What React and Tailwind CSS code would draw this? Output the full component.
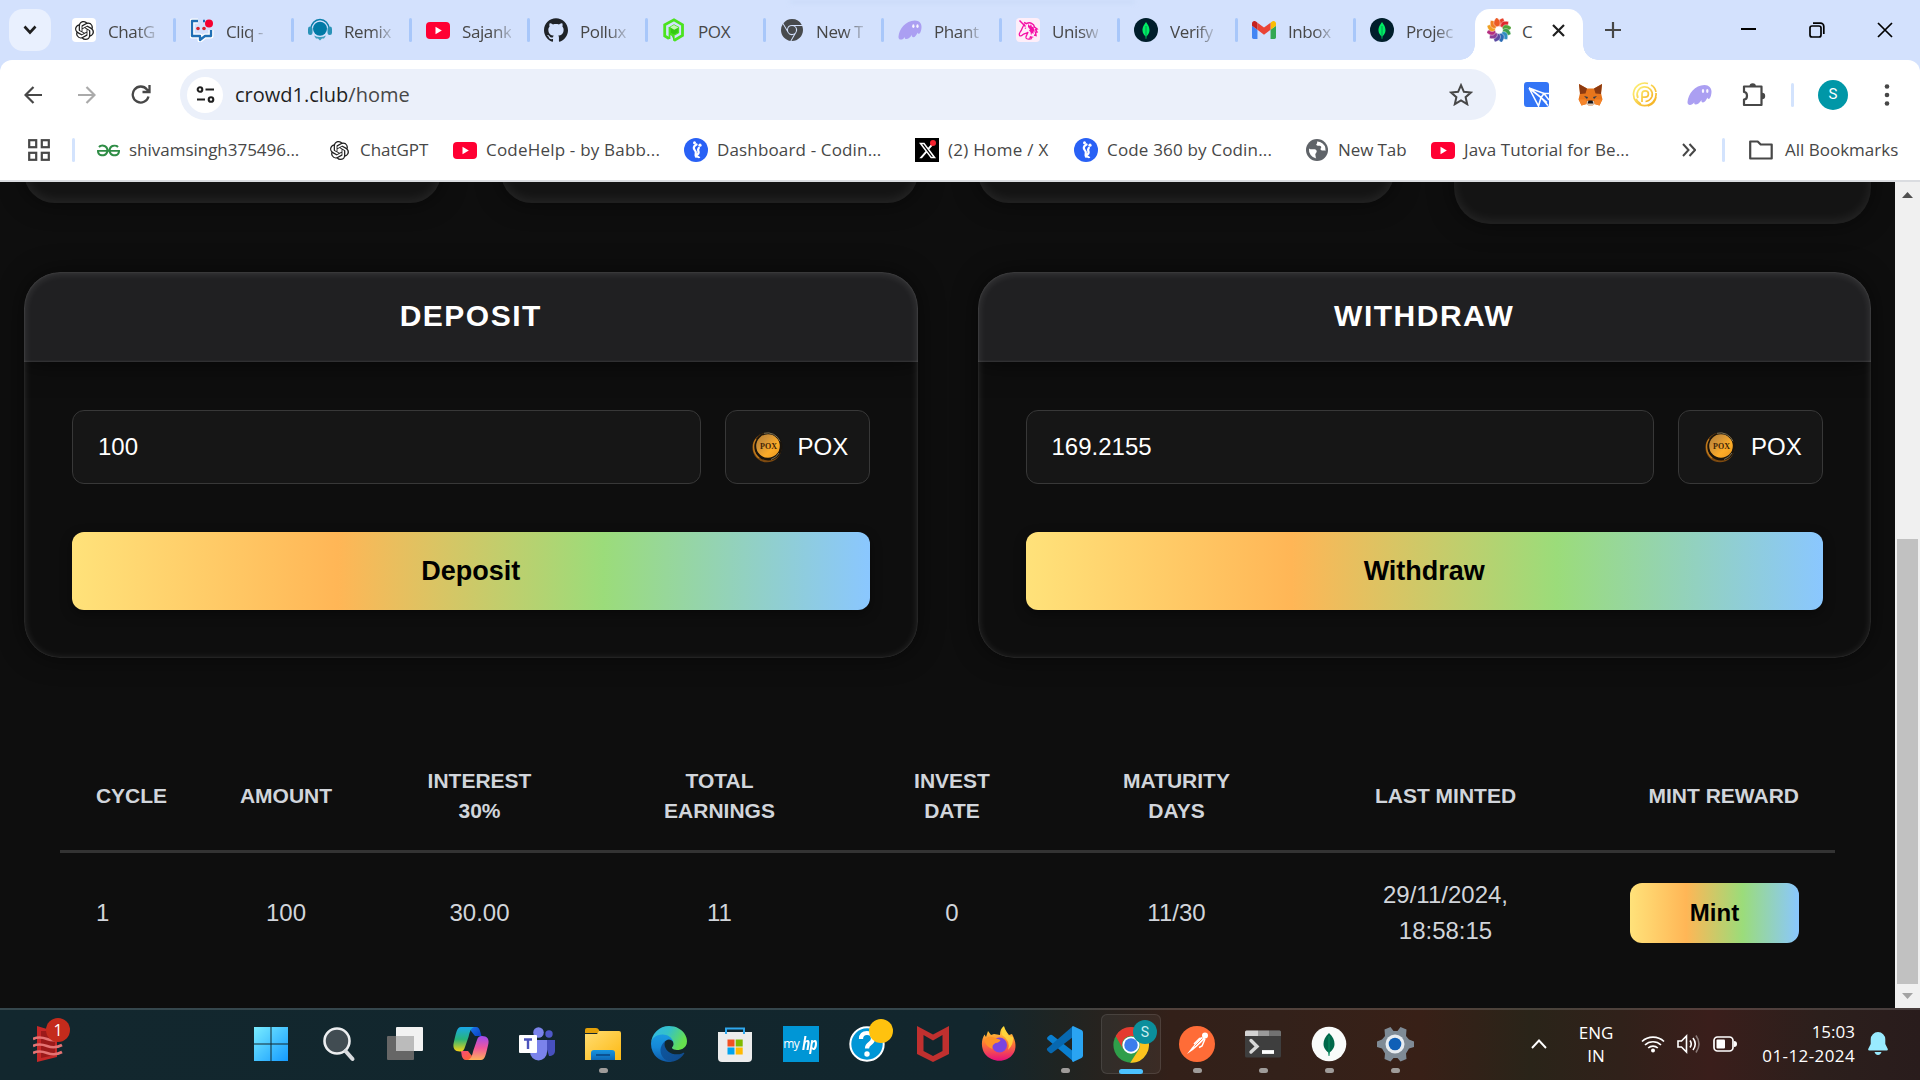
import React from "react";
import { SiOpenai, SiYoutube, SiGithub, SiGooglechrome, SiGeeksforgeeks } from "react-icons/si";
import { FaXTwitter } from "react-icons/fa6";

/* ---------- browser icons ---------- */
const OpenAITile = () => (
  <div className="flex h-6 w-6 items-center justify-center rounded-[4px] bg-white text-[#1f1f1f]"><SiOpenai size={19} /></div>
);
const YouTube = () => (
  <svg width="24" height="24" viewBox="0 0 24 24"><rect y="4" width="24" height="17" rx="4" fill="#ff0033" /><path d="M9.500 8.800v7.400l6.300-3.700z" fill="#fff" /></svg>
);
const Cliq = () => (
  <svg width="24" height="24" viewBox="0 0 24 24" fill="none">
    <path d="M8 3H2v15h8v4l5-4h6v-6" stroke="#fff" strokeWidth="5" strokeLinejoin="round" />
    <path d="M8 3H2v15h8v4l5-4h6v-6M13 3h2" stroke="#1f6fb5" strokeWidth="2.300" strokeLinejoin="round" />
    <circle cx="8" cy="10.500" r="1.800" fill="#d9222a" /><circle cx="14" cy="10.500" r="1.800" fill="#d9222a" /><circle cx="19" cy="5.500" r="4" fill="#f5002f" />
  </svg>
);
const Remix = () => (
  <svg width="24" height="24" viewBox="0 0 24 24">
    <path d="M3 11a9 9.500 0 0 1 18 0" fill="none" stroke="#0a7fab" strokeWidth="1.600" />
    <rect x="0" y="8.500" width="4.500" height="8.500" rx="2.200" fill="#2a93b8" /><rect x="19.500" y="8.500" width="4.500" height="8.500" rx="2.200" fill="#2a93b8" />
    <circle cx="12" cy="10.800" r="7" fill="#007aa6" /><path d="M6 17.500q6 3 12 0l-2 3h-2l-2 2-2-2H8z" fill="#3b9dbd" />
  </svg>
);
const Pox = () => (
  <svg width="24" height="24" viewBox="0 0 24 24" fill="none">
    <path d="M7 20.500l-4.300-2.600V6.800L12 1.800l8.500 5v10.700l-8.500 5" stroke="#4be31f" strokeWidth="2.800" />
    <path d="M12 23v-4.500l-4-2.300V9.300L12 7l4.500 2.500v5.200L12 17.200 9 15.500" fill="#35c912" stroke="#4be31f" strokeWidth="1.300" />
    <path d="M8 9.300l4.200 2.500 4.300-2.400L12 7z" fill="#c4f7b4" /><path d="M7.500 9v12" stroke="#4be31f" strokeWidth="1.800" />
  </svg>
);
const Ghost = () => (
  <svg width="25" height="24" viewBox="0 0 25 24">
    <path d="M.5 19C1 11 8 2 17.500 2c4.500 0 7 3 7 6.500 0 4-1.500 7.500-2.800 7.500-.8 0-1.200-1-1.200-1.500-1.200 2.500-2.800 5-4.500 5-1.500 0-1.800-1.500-1.500-2.500-2 3-4 4.500-5.800 4.500-1.500 0-1.700-1.200-1.400-2.200C6 21 4.500 22 3 22 1.200 22 .4 20.600.5 19z" fill="#ab9ff2" />
    <ellipse cx="16" cy="8" rx="1.200" ry="1.900" fill="#f8f6ff" /><ellipse cx="20.300" cy="8" rx="1.200" ry="1.900" fill="#f8f6ff" />
  </svg>
);
const Unicorn = () => (
  <svg width="24" height="24" viewBox="0 0 24 24"><rect width="24" height="24" rx="4" fill="#feeef9" />
    <path d="M3.500 2.500l6 6M8 4.500l2.500 1.200C14 3.500 18 6 18.500 9l2.500 2-1.500.5L21 14l-1.500.3.500 3.200-2-.5" stroke="#f511a6" strokeWidth="1.500" fill="none" />
    <path d="M9 6.500C6 8 6.500 11 4.500 13.500c-1 1.500-2 2.500-1 4 1 1 2.500 0 3.500-1 2-1.500 4-1 5-2.500-.5 3-2.500 3.500-2 6 1 1.500 4 1.500 6 .5" fill="none" stroke="#f511a6" strokeWidth="1.300" />
    <path d="M12 6l2 2 1-2 1 3 1.500-.5.500 3 1 2-1.500 0 0 2.500-1.500-1-1 2.500-.5-3.500-1.500-1.500 1-1-2-2.500z" fill="#f511a6" />
    <path d="M8.300 10l1.900-.6-.3 1.600z" fill="#f511a6" /><path d="M14 18l4 1-5 2z" fill="#f511a6" />
  </svg>
);
const Mongo = () => (
  <svg width="24" height="24" viewBox="0 0 24 24"><circle cx="12" cy="12" r="12" fill="#001e2b" /><path d="M12 4c-3 4-3.500 6-3.500 8.500C8.500 15 10 17 11.500 18.300L12 21l.5-2.700C14 17 15.500 15 15.500 12.500 15.500 10 15 8 12 4z" fill="#00ed64" /><path d="M12 8v13" stroke="#00894b" strokeWidth=".8" /></svg>
);
const Gmail = () => (
  <svg width="24" height="18" viewBox="52 42 88 66">
    <path fill="#4285f4" d="M58 108h14V74L52 59v43c0 3.320 2.690 6 6 6" /><path fill="#34a853" d="M120 108h14c3.320 0 6-2.690 6-6V59l-20 15" />
    <path fill="#fbbc04" d="M120 48v26l20-15v-8c0-7.420-8.470-11.650-14.400-7.200" /><path fill="#ea4335" d="M72 74V48l24 18 24-18v26L96 92" />
    <path fill="#c5221f" d="M52 51v8l20 15V48l-5.600-4.200c-5.940-4.450-14.400-.22-14.400 7.200" />
  </svg>
);
const petals = ["#e8412c", "#e0282e", "#53a33a", "#3a9e4a", "#2f8fc0", "#2b6cb5", "#5b4aa2", "#8a3d97", "#b52e80", "#f0a021", "#f07f21", "#ec5a24"];
const Swirl = () => (
  <svg width="24" height="24" viewBox="0 0 24 24">
    {petals.map((c, i) => <path key={c} d="M12 8.200C9 5.500 10.500 1.500 16 0c2.500 3 1 7.500-2 8.700z" fill={c} transform={`rotate(${i * 30} 12 12)`} stroke="#fff" strokeWidth=".4" />)}
    <circle cx="12" cy="12" r="3.300" fill="#fff" />
  </svg>
);
const Coding = () => (
  <svg width="24" height="24" viewBox="0 0 24 24"><circle cx="12" cy="12" r="12" fill="#2961f5" /><path d="M12.500 6.500C9.500 8 9 10.500 11 12.500c2 1.800 0 3.500.8 5.500 1.200-.8 3.200-2 2.800-4-.4-1.800-1.200-2.300.2-4" stroke="#fff" strokeWidth="2.300" strokeLinecap="round" strokeLinejoin="round" fill="none" /><path d="M11 18.500c2 0 4 .2 4.500 1.500" stroke="#fff" strokeWidth="1.800" fill="none" /><circle cx="10.500" cy="4.800" r="1.500" fill="#fff" /><circle cx="16" cy="7.200" r="1.600" fill="#fff" /></svg>
);
const XDot = () => (
  <div className="relative flex h-6 w-6 items-center justify-center bg-black text-white"><FaXTwitter size={19} /><span className="absolute right-[3px] top-[2px] h-[6px] w-[6px] rounded-full bg-[#f4212e]" /></div>
);
const Globe = () => (
  <svg width="22" height="22" viewBox="0 0 22 22"><circle cx="11" cy="11" r="11" fill="#5f6368" /><path d="M3 9.500c3 2 6-.5 7.500 2 1 2-2 3-1 5 .3 1 0 2 .8 3A9 9 0 0 1 3 9.500zM11 2.500c1 2-2 3 0 4 2 .8 3-.5 4 1s-1.500 2 0 3.500c2 1.500 3.500-.5 4.500 1A9 9 0 0 0 14 3a8 8 0 0 0-3-.5z" fill="#fff" /></svg>
);
const Tron = () => (
  <svg width="25" height="25" viewBox="0 0 25 25"><rect width="25" height="25" rx="3" fill="#3375f6" /><path d="M5 6l15 5.500h5M5 6l9.500 18L17 15.500l7 8M5 6l12 9.500 3-4 5 6.500M17 15.500l6 5" fill="none" stroke="#fff" strokeWidth="1.600" /></svg>
);
const Fox = () => (
  <svg width="25" height="24" viewBox="0 0 25 24">
    <path d="M1 1l8 4.500h7L24 1l-1 9 1.500 6.500-3 6-5-1.500-2 1.500h-4l-2-1.500-5 1.500-3-6L2 10z" fill="#e8761c" />
    <path d="M1 1l8 4.500-1.500 5L2 11zM24 1l-8 4.500 1.500 5L23 11z" fill="#8c3a10" /><path d="M1 16.500h7l.5 4.500-5 1.500zM24 16.500h-7l-.5 4.500 5 1.500z" fill="#f5852a" />
    <path d="M6 13l4 1-1 2zM19 13l-4 1 1 2z" fill="#2b3b4e" /><path d="M9 18h7l.6 3-2.100 1.600h-4L8.400 21z" fill="#d8c5b5" /><path d="M10.500 17.500h4l.8 3h-5.600z" fill="#16171b" />
  </svg>
);
const Coin = () => (
  <svg width="26" height="25" viewBox="0 0 26 25" fill="none" strokeWidth="1.700">
    <defs><linearGradient id="cg" x1="0" y1="0" x2="1" y2="1"><stop stopColor="#fdf37a" /><stop offset="1" stopColor="#f5ac1c" /></linearGradient></defs>
    <g stroke="url(#cg)"><path d="M16 1.500A11.300 11.300 0 1 0 24 11M19 3q4 2 5 7M16 24q7-2 8-9" /><path d="M6 16a7.600 7.600 0 1 1 14-1.500q-2 4.500-6.500 5" /><path d="M10 20v-8a3.200 3.200 0 1 1 3.200 3.200H10M4 17q2 4 5 5" /></g>
  </svg>
);
const Puzzle = () => (
  <svg width="26" height="26" viewBox="0 0 26 26"><path d="M3 4.500h17.500V23H3v-5.500c4 0 4-7.500 0-7.500z" fill="none" stroke="#474747" strokeWidth="2.200" strokeLinejoin="round" /><path d="M8.500 4.500a3.200 3.200 0 0 1 6.400 0zM21 10.800a3.200 3.200 0 0 1 0 6.400z" fill="#474747" /></svg>
);

const Sep = () => <div className="h-6 w-[3px] shrink-0 rounded-full bg-[#a8c7fa]" />;

const fade = "[mask-image:linear-gradient(90deg,#000_60%,rgba(0,0,0,0.25))]";
const tabs = [
  { icon: <OpenAITile />, text: "ChatG", c: fade },
  { icon: <Cliq />, text: "Cliq -", c: fade },
  { icon: <Remix />, text: "Remix", c: fade },
  { icon: <YouTube />, text: "Sajank", c: fade },
  { icon: <SiGithub size={24} color="#1f2328" />, text: "Pollux", c: fade },
  { icon: <Pox />, text: "POX", c: "" },
  { icon: <SiGooglechrome size={22} color="#474a4d" />, text: "New T", c: fade },
  { icon: <Ghost />, text: "Phant", c: fade },
  { icon: <Unicorn />, text: "Unisw", c: fade },
  { icon: <Mongo />, text: "Verify", c: fade },
  { icon: <Gmail />, text: "Inbox", c: fade },
  { icon: <Mongo />, text: "Projec", c: fade },
];

function TabStrip() {
  return (
    <div className="relative flex h-[60px] items-start bg-[#d3e1fd] pl-[9px]">
      <div className="absolute left-[790px] top-0 h-1 w-[345px] bg-[#c6d8f5] opacity-60 blur-[2px]" />
      <div className="mt-[9px] flex h-[42px] w-[42px] items-center justify-center rounded-[14px] bg-[#e9f0fe]">
        <svg width="14" height="10" viewBox="0 0 14 10"><path d="M1.500 1.500l5.500 6 5.500-6" fill="none" stroke="#1f1f1f" strokeWidth="2.600" /></svg>
      </div>
      <div className="ml-[21px] flex h-[60px] w-[1403px] items-center">
        {tabs.map((t, i) => (
          <div key={i} className="flex w-[118px] shrink-0 items-center">
            <div className="flex w-6 items-center justify-center">{t.icon}</div>
            <div className="ml-3 mt-[3px] w-[65px]">
              <span className={`inline-block whitespace-nowrap text-[17px] tracking-[-0.4px] text-[#474747] ${t.c}`}>{t.text}</span>
            </div>
            {i < 11 && <Sep />}
          </div>
        ))}
      </div>
      <div className="relative mt-[9px] flex h-[51px] w-[108px] items-center rounded-t-[15px] bg-white pl-3">
        <div className="absolute -left-[15px] bottom-0 h-[15px] w-[15px] bg-[radial-gradient(circle_at_0_0,transparent_14.500px,white_15px)]" />
        <div className="absolute -right-[15px] bottom-0 h-[15px] w-[15px] bg-[radial-gradient(circle_at_100%_0,transparent_14.500px,white_15px)]" />
        <div className="mb-[9px]"><Swirl /></div>
        <span className="mb-[6px] ml-[11px] w-[13px] text-[17px] text-[#474747]">C</span>
        <svg className="mb-[9px] ml-[17px]" width="13" height="13" viewBox="0 0 13 13"><path d="M1 1l11 11M12 1L1 12" stroke="#1f1f1f" strokeWidth="2.200" /></svg>
      </div>
      <svg className="ml-[22px] mt-[22px]" width="16" height="16" viewBox="0 0 16 16"><path d="M8 0v16M0 8h16" stroke="#474747" strokeWidth="2.200" /></svg>
      <svg className="ml-[120px] mt-[28px]" width="15" height="2"><rect width="15" height="2" fill="#000" /></svg>
      <svg className="ml-[53px] mt-[22px]" width="16" height="16" viewBox="0 0 16 16" fill="none" stroke="#000" strokeWidth="1.700"><rect x="1" y="4" width="11" height="11" rx="2" /><path d="M4 1.200h7.500a3.300 3.300 0 0 1 3.300 3.300V12" /></svg>
      <svg className="ml-[52px] mt-[22px]" width="16" height="16" viewBox="0 0 16 16"><path d="M1 1l14 14M15 1L1 15" stroke="#000" strokeWidth="1.700" /></svg>
    </div>
  );
}

function Toolbar() {
  return (
    <div className="bg-[#d3e1fd]">
      <div className="flex h-[69px] items-center rounded-t-[12px] bg-white pl-[24px]">
        <svg width="19" height="18" viewBox="0 0 19 18" fill="none" stroke="#474747" strokeWidth="2.200"><path d="M18 9H2M9.500 1L1.500 9l8 8" /></svg>
        <svg className="ml-[34px]" width="19" height="18" viewBox="0 0 19 18" fill="none" stroke="#aaa" strokeWidth="2.200"><path d="M1 9h16M9.500 1l8 8-8 8" /></svg>
        <svg className="ml-[35px]" width="20" height="19" viewBox="0 0 20 19" fill="none" stroke="#474747" strokeWidth="2.300"><path d="M17.500 11.500A8 8 0 1 1 16 4.500l2 2M18.500 0v7h-7" /></svg>
        <div className="ml-[29px] flex h-[51px] w-[1316px] items-center rounded-full bg-[#ebf0fa] pl-[7px] pr-[23px]">
          <div className="flex h-9 w-9 items-center justify-center rounded-full bg-white">
            <svg width="19" height="17" viewBox="0 0 19 17" fill="none" stroke="#1f1f1f" strokeWidth="2.100"><circle cx="4" cy="3.500" r="2.300" /><path d="M9.500 3.500H18M1 13.500h8" /><circle cx="15" cy="13.500" r="2.300" /></svg>
          </div>
          <span className="ml-[12px] flex-1 text-[20px] text-[#474747]"><span className="text-[#1f1f1f]">crowd1.club</span>/home</span>
          <svg width="24" height="23" viewBox="0 0 24 23"><path d="M12 2.200l2.900 6.600 7 .7-5.300 4.700 1.600 7L12 17.500l-6.200 3.700 1.600-7L2.100 9.500l7-.7z" fill="none" stroke="#474747" strokeWidth="2" /></svg>
        </div>
        <div className="ml-[28px] flex items-center gap-[29px]"><Tron /><Fox /><Coin /><Ghost /><Puzzle /></div>
        <div className="ml-[24px] h-6 w-[3px] rounded-full bg-[#d3e3fd]" />
        <div className="ml-[24px] flex h-[30px] w-[30px] items-center justify-center rounded-full bg-[#0097a7] font-[Roboto] text-[15px] text-white">S</div>
        <svg className="ml-[36px]" width="6" height="22" viewBox="0 0 6 22" fill="#474747"><circle cx="3" cy="2.500" r="2.300" /><circle cx="3" cy="11" r="2.300" /><circle cx="3" cy="19.500" r="2.300" /></svg>
      </div>
    </div>
  );
}

const bookmarks = [
  { icon: <SiGeeksforgeeks size={23} color="#2f8d46" />, text: "shivamsingh375496...", w: "w-[233px]", g: "ml-[9px] tracking-[-0.02px]" },
  { icon: <SiOpenai size={19} color="#1f1f1f" />, text: "ChatGPT", w: "w-[123px]", g: "ml-[11px] tracking-[-0.05px]" },
  { icon: <YouTube />, text: "CodeHelp - by Babb...", w: "w-[231px]", g: "ml-[9px] tracking-[0.2px]" },
  { icon: <Coding />, text: "Dashboard - Codin...", w: "w-[231px]", g: "ml-[9px] tracking-[0.15px]" },
  { icon: <XDot />, text: "(2) Home / X", w: "w-[159px]", g: "ml-[9px] tracking-[0.3px]" },
  { icon: <Coding />, text: "Code 360 by Codin...", w: "w-[232px]", g: "ml-[9px] tracking-[0.17px]" },
  { icon: <Globe />, text: "New Tab", w: "w-[125px]", g: "ml-[10px] tracking-[-0.1px]" },
  { icon: <YouTube />, text: "Java Tutorial for Be...", w: "w-[251px]", g: "ml-[9px] tracking-[0.1px]" },
];

function Bookmarks() {
  return (
    <div className="flex h-[53px] items-start border-b-2 border-[#dadce0] bg-white pl-[28px] text-[17px] text-[#474747]">
      <div className="flex h-[42px] items-center whitespace-nowrap">
        <svg width="22" height="22" viewBox="0 0 22 22" fill="none" stroke="#474747" strokeWidth="2.200"><rect x="1.200" y="1.200" width="7" height="7" /><rect x="13.800" y="1.200" width="7" height="7" /><rect x="1.200" y="13.800" width="7" height="7" /><rect x="13.800" y="13.800" width="7" height="7" /></svg>
        <div className="ml-[22px] mr-[22px] h-6 w-[3px] rounded-full bg-[#d3e3fd]" />
        {bookmarks.map((b) => (
          <div key={b.text} className={`flex shrink-0 items-center ${b.w}`}>{b.icon}<span className={b.g}>{b.text}</span></div>
        ))}
        <svg width="14" height="14" viewBox="0 0 14 14" fill="none" stroke="#474747" strokeWidth="2"><path d="M1 1l5.500 6L1 13M7.500 1L13 7l-5.500 6" /></svg>
        <div className="ml-[26px] mr-[24px] h-6 w-[3px] rounded-full bg-[#d3e3fd]" />
        <svg width="24" height="20" viewBox="0 0 24 20" fill="none" stroke="#474747" strokeWidth="2.200" strokeLinejoin="round"><path d="M1.200 1.500h7.500l3 3h11v14H1.200z" /></svg>
        <span className="ml-[12px] tracking-[0px]">All Bookmarks</span>
      </div>
    </div>
  );
}

/* ---------- web page ---------- */
const PoxCoin = () => (
  <svg width="31" height="32" viewBox="0 0 31 32">
    <defs><linearGradient id="pc" x1="0" y1="0" x2="1" y2="1"><stop stopColor="#b87f30" /><stop offset=".3" stopColor="#cf9138" /><stop offset=".65" stopColor="#fdac28" /><stop offset="1" stopColor="#e8951d" /></linearGradient></defs>
    <ellipse cx="15" cy="16.500" rx="14.600" ry="14.800" fill="#7d4a10" /><circle cx="16.200" cy="15.500" r="14" fill="#1a140c" /><circle cx="16" cy="15" r="11.800" fill="url(#pc)" />
    <path d="M12 2.300a13.500 13.500 0 0 1 16 8M27 22a13.500 13.500 0 0 1-8 6.500" stroke="#7d7356" strokeWidth="1" fill="none" /><path d="M4 8a14 14 0 0 0 3 19" stroke="#c07a1c" strokeWidth="1.300" fill="none" />
    <text x="16.500" y="18" textAnchor="middle" fontFamily="Liberation Serif" fontWeight="700" fontSize="8" fill="#3f2608">POX</text>
  </svg>
);
const rainbow = "bg-[linear-gradient(90deg,#ffe27a_0%,#ffb656_33.3%,#9bdc7a_66.6%,#8ac7ff_100%)]";

function Panel({ title, value, action }) {
  return (
    <div className="h-[386px] overflow-visible rounded-[36px] bg-[#0e0e0e] shadow-[0_0_24px_rgba(0,0,0,0.5)]">
      <div className="relative h-full overflow-hidden rounded-[36px]">
        <div className="flex h-[90px] items-center justify-center bg-[#202022] pb-[3px] text-[30px] font-bold tracking-[1.5px] text-white shadow-[0_0_24px_rgba(0,0,0,0.6),inset_0_-1px_2px_rgba(255,255,255,0.1)]">{title}</div>
        <div className="px-12 pt-12">
          <div className="flex gap-6">
            <div className="flex h-[74px] flex-1 items-center rounded-[12px] border border-[#383838] bg-[#161616] pl-[25px] text-[24px] text-white">{value}</div>
            <div className="flex h-[74px] w-[145px] items-center rounded-[12px] border border-[#383838] bg-[#161616] pl-[26px] text-[24px] text-white"><PoxCoin /><span className="ml-[15px]">POX</span></div>
          </div>
          <div className={`mt-12 flex h-[78px] items-center justify-center rounded-[12px] text-[27px] font-bold text-black shadow-[0_4px_12px_rgba(0,0,0,0.4)] ${rainbow}`}>{action}</div>
        </div>
        <div className="pointer-events-none absolute inset-0 rounded-[36px] shadow-[inset_0_1px_8px_rgba(255,255,255,0.14),inset_0_0_2px_rgba(255,255,255,0.16)]" />
      </div>
    </div>
  );
}

const cols = [
  ["CYCLE"], ["AMOUNT"], ["INTEREST", "30%"], ["TOTAL", "EARNINGS"], ["INVEST", "DATE"], ["MATURITY", "DAYS"], ["LAST MINTED"], ["MINT REWARD"],
];
const cells = [["1"], ["100"], ["30.00"], ["11"], ["0"], ["11/30"], ["29/11/2024,", "18:58:15"]];
const grid = "grid grid-cols-[143px_166px_221px_259px_206px_243px_295px_242px] items-center text-center text-[#d1d5db]";

function Page() {
  return (
    <div className="flex h-[826px] overflow-hidden bg-[#0e0e0e] font-['Liberation_Sans',Arial,sans-serif]">
      <div className="w-[1895px] overflow-hidden px-6">
        <div className="grid h-[42px] grid-cols-4 items-start gap-[60px]">
          {[0, 1, 2, 3].map((i) => (
            <div key={i} className={`-mt-10 rounded-[36px] bg-[#141414] shadow-[inset_0_-3px_12px_rgba(255,255,255,0.08),0_0_24px_rgba(0,0,0,0.5)] ${i === 3 ? "h-[82px]" : "h-[61px]"}`} />
          ))}
        </div>
        <div className="mt-12 grid grid-cols-2 gap-[60px]">
          <Panel title="DEPOSIT" value="100" action="Deposit" />
          <Panel title="WITHDRAW" value="169.2155" action="Withdraw" />
        </div>
        <div className="mx-9 mt-[108px] w-[1775px]">
          <div className={`${grid} h-[87px] border-b-[3px] border-[#333] pb-[26px] text-[21px] font-bold leading-[30px]`}>
            {cols.map((c, i) => (
              <div key={i} className={i === 7 ? "pr-9 text-right" : ""}>{c.map((l) => <div key={l}>{l}</div>)}</div>
            ))}
          </div>
          <div className={`${grid} h-[120px] text-[24px] leading-[36px]`}>
            {cells.map((c, i) => (
              <div key={i} className={i === 0 ? "pl-9 text-left" : ""}>{c.map((l) => <div key={l}>{l}</div>)}</div>
            ))}
            <div className={`ml-[37px] flex h-[60px] w-[169px] items-center justify-center rounded-[12px] font-bold text-black ${rainbow}`}>Mint</div>
          </div>
        </div>
      </div>
      <div className="flex w-[25px] flex-col items-center bg-[#f0f0f0]">
        <svg className="mt-[10px]" width="11" height="6"><path d="M0 6L5.500 0 11 6z" fill="#505050" /></svg>
        <div className="mt-[341px] h-[445px] w-[21px] bg-[#c1c1c1]" />
        <svg className="mt-[9px]" width="11" height="6"><path d="M0 0l5.500 6L11 0z" fill="#a3a3a3" /></svg>
      </div>
    </div>
  );
}

/* ---------- taskbar icons ---------- */
const S = ({ children, vb = "0 0 36 36" }) => <svg width="36" height="36" viewBox={vb} fill="none" className="overflow-visible">{children}</svg>;
const G = ({ id, a, b, c, x2 = 1, y2 = 1 }) => (
  <linearGradient id={id} x1="0" y1="0" x2={x2} y2={y2}><stop stopColor={a} />{c && <stop offset=".5" stopColor={c} />}<stop offset="1" stopColor={b} /></linearGradient>
);
const apps = [
  { i: <S><defs><linearGradient id="w" x1="0" y1="0" x2="36" y2="36" gradientUnits="userSpaceOnUse"><stop stopColor="#7cefff" /><stop offset="1" stopColor="#1198ff" /></linearGradient></defs><path d="M1 1h16.500v16.500H1zM18.500 1H35v16.500H18.500zM1 18.500h16.500V35H1zM18.500 18.500H35V35H18.500z" fill="url(#w)" /></S> },
  { i: <S><circle cx="16" cy="15" r="12.500" fill="#414c52" stroke="#eceef0" strokeWidth="2.600" /><path d="M24.500 25l7 8" stroke="#d9dcdf" strokeWidth="4" strokeLinecap="round" /></S> },
  { i: <S><rect y="10" width="27" height="24" rx="1" fill="#666" /><rect x="9" y="1" width="27" height="24" rx="1" fill="#f2f2f2" /><path d="M9 10h18v15H9z" fill="#bbb" /></S> },
  { i: <S><defs><G id="c1" a="#1aa7e8" c="#28b47b" b="#f8d313" x2={0} /><G id="c2" a="#9f4cf0" c="#f0569b" b="#fdb15b" x2={0} /><G id="c3" a="#1b74e8" b="#0a3fc4" /><G id="c4" a="#f5487c" b="#fb6a28" /></defs>
    <path d="M18 1h5c2.500 0 3.500 2 4.200 4.500L28.500 10H22l-4-5z" fill="url(#c3)" /><path d="M18 34h-5c-2.500 0-3.500-2-4.200-4L8 25h7l4 5z" fill="url(#c4)" />
    <path d="M8 1h13c-3 1-4 4-5.500 10L12 21c-1 3-2 4.500-5 4.500-5 0-8-3-6-10C3 7 4 1 8 1z" fill="url(#c1)" /><path d="M28 34H15c3-1 4-4 5.500-10L24 14c1-3 2-4 5-4 5 0 8 3 6 9.500C33 28 32 34 28 34z" fill="url(#c2)" /></S> },
  { i: <S><circle cx="30" cy="8" r="3.700" fill="#4f58c8" /><path d="M25 14h11v11c0 3-2.500 5-6 5z" fill="#4750bd" /><circle cx="19.500" cy="6.500" r="5.300" fill="#7b83eb" /><path d="M11 14h17v12a8.500 8.500 0 0 1-17 0z" fill="#7b83eb" /><rect y="9" width="18" height="18" rx="1" fill="#fff" /><path d="M5 13.500h8M9 13v10" stroke="#4b53bc" strokeWidth="2.400" /></S> },
  { dot: 1, i: <S><defs><G id="f" a="#ffdd72" b="#fdb913" /><G id="f2" a="#1795e0" b="#0f68b5" x2={0} /></defs><path d="M0 4q0-2 2-2h9q2 0 3 2l1 3H0z" fill="#e3a008" /><path d="M0 8h12l2-3h20q2 0 2 2v27H0z" fill="url(#f)" /><path d="M6 34V27q0-3 3-3h18q3 0 3 3v7z" fill="url(#f2)" /><path d="M11 29h14" stroke="#0b4c8c" strokeWidth="1.800" /></S> },
  { i: <S vb="0 0 256 256"><defs><G id="e1" a="#0c59a4" b="#114a8b" /><G id="e2" a="#1b9de2" b="#0f5aa8" c="#1588d8" x2={0} /><G id="e3" a="#2fb7e8" b="#66e04e" c="#35c1c8" y2={0.4} /></defs>
    <path d="M231 190.500c-3.400 1.800-6.900 3.400-10.500 4.700a101.900 101.900 0 0 1-35.900 6.400c-47.300 0-88.500-32.500-88.500-74.300a31.500 31.500 0 0 1 16.400-27.300c-42.800 1.800-53.800 46.400-53.800 72.500 0 74 68.100 81.400 82.800 81.400 7.900 0 19.800-2.300 27-4.600l1.300-.4a128.300 128.300 0 0 0 66.600-52.800 4 4 0 0 0-5.400-5.600z" fill="url(#e1)" />
    <path d="M105.700 241.400a79.200 79.200 0 0 1-22.700-21.300 80.700 80.700 0 0 1 29.500-120c3.200-1.500 8.500-4.100 15.600-4a32.400 32.400 0 0 1 25.700 13 31.900 31.900 0 0 1 6.300 18.700c0-.2 24.500-79.600-80-79.600-43.900 0-80 41.600-80 78.200a130.200 130.200 0 0 0 12.100 56 128 128 0 0 0 156.400 67 75.500 75.500 0 0 1-62.800-8z" fill="url(#e2)" />
    <path d="M152.300 148.900c-.9 1-3.400 2.500-3.400 5.600 0 2.600 1.700 5.200 4.800 7.300 14.300 10 41.400 8.600 41.500 8.600 10.700 0 21.100-2.900 30.300-8.300a61.400 61.400 0 0 0 30.400-52.900c.3-22.400-8-37.300-11.300-43.900C223.500 23.900 177.700 0 128 0A128 128 0 0 0 0 126.200c.5-36.500 36.800-66 80-66 3.500 0 23.500.3 42 10a72.600 72.600 0 0 1 30.900 29.300c6.100 10.600 7.200 24.100 7.200 29.500s-2.700 13.300-7.800 19.900z" fill="url(#e3)" /></S> },
  { i: <S><path d="M1 6h34v26q0 4-4 4H5q-4 0-4-4z" fill="#ececec" /><path d="M9 8V2.500h18V8" stroke="#2fa8ee" strokeWidth="2" /><path d="M10.500 13.500h7v7h-7z" fill="#f25022" /><path d="M18.700 13.500h7v7h-7z" fill="#7fba00" /><path d="M10.500 21.500h7v7h-7z" fill="#00a4ef" /><path d="M18.700 21.500h7v7h-7z" fill="#ffb900" /></S> },
  { i: <div className="flex h-9 w-9 items-center justify-center bg-[#0096d6] text-[12px] tracking-[-0.8px] text-white"><span className="pr-[1px]">my</span><span className="inline-block scale-x-[0.8] text-[17px] font-bold italic">hp</span></div> },
  { i: <S><circle cx="18" cy="18" r="16.700" fill="#0096d6" stroke="#fff" strokeWidth="2" /><path d="M12 13q0-6 6-6t6 5.500q0 3-3 5-3 2-3 5" stroke="#fff" strokeWidth="4.200" /><circle cx="18" cy="28" r="2.700" fill="#fff" /><circle cx="32" cy="5" r="12" fill="#ffc20e" /></S> },
  { i: <S><path fillRule="evenodd" d="M2 0l16 8.500L34 0v28l-16 8-16-8zM8.500 9v16l9.500 5 9.500-5V9L18 14.500z" fill="#c0302f" /></S> },
  { i: <S><defs><G id="ff" a="#ffe63c" c="#ff7a33" b="#e5107c" x2={0} /></defs><path d="M23 0c.5 4 3 6 5 9l3-1c4 7 5 15 1 20-6 9-21 9-28 0C0 22 0 14 3.500 8.500L5 11l2-6 3 4 3-1 6 1c0-4 1-7 4-9z" fill="url(#ff)" /><circle cx="18.500" cy="19" r="7.500" fill="#7a45e0" /><path d="M3.500 15q2-5 8-4l8 3q-1 2.500-5 3-4 2-3 6-6-2-8-8z" fill="#ff9328" /><path d="M21 9q9 6 6 15 6-6 5-13-2 0-5-2-2-4-4-8-3 4-2 8z" fill="#ffd83c" opacity=".85" /></S> },
  { dot: 1, i: <S><path d="M0 11.500l3-2.500q1-.6 2 0L27 26v10L.5 13.500q-1-1 0-2z" fill="#0a7fd0" /><path d="M0 22.500L26 0v11L5 27q-1 .6-2 0l-2.500-2.300q-1-1-.5-2.200z" fill="#0768b0" /><path d="M26 0l8.500 4q1.500.8 1.500 2.500v23q0 1.700-1.500 2.500L26 36l-1-1V1z" fill="#2aa4f2" /></S> },
  { active: 1, i: <div className="relative"><S vb="0 0 48 48"><circle cx="24" cy="24" r="23.500" fill="#2f9e4a" /><path d="M3.600 12A23.500 23.500 0 0 1 44.500 12H24a12 12 0 0 0-10.400 18z" fill="#e53a30" /><path d="M44.500 12A23.500 23.500 0 0 1 23 47.500L34.400 30A12 12 0 0 0 24 12z" fill="#fcc31e" /><circle cx="24" cy="24" r="11.500" fill="#fff" /><circle cx="24" cy="24" r="9" fill="#3b7ded" /></S><span className="absolute -right-[8px] -top-[7px] flex h-6 w-6 items-center justify-center rounded-full bg-[#0b8f9c] font-[Roboto] text-[14px] text-[#c9eef0]">S</span></div> },
  { dot: 1, i: <S><circle cx="18" cy="18" r="18" fill="#ff6c37" /><circle cx="26" cy="9.500" r="3" fill="#fff" /><path d="M26.500 12.500L18 20.500l-4 3.500-6 4 5-6.500L22 11z" fill="#fff" /><path d="M21 12l-6 6M26 13l-3 7-3 1.500" stroke="#fff" strokeWidth="1.500" /><path d="M23.500 12.500l-8 8" stroke="#ff6c37" strokeWidth=".8" /></S> },
  { dot: 1, i: <S><rect y="4.500" width="36" height="27" rx="1.500" fill="#3e3e3e" /><path d="M0 10V6q0-1.500 1.500-1.500H13V10z" fill="#d2d2d2" /><path d="M13 4.500h11V10H13z" fill="#9a9a9a" /><path d="M24 4.500h10.500Q36 4.500 36 6v4H24z" fill="#727272" /><path d="M6 14.500l6 6-6 5.500" stroke="#d8d8d8" strokeWidth="3.400" strokeLinecap="round" /><path d="M17 26h12" stroke="#fff" strokeWidth="3.800" /></S> },
  { dot: 1, i: <S><circle cx="18" cy="18" r="17.300" fill="#f9fbfa" /><path d="M18 7c-4 4-5.500 7-5.500 11 0 4 2.500 6.500 4.800 8.500l.7 3 .7-3c2.300-2 4.800-4.500 4.800-8.500 0-4-1.500-7-5.500-11z" fill="#00684a" /><path d="M18 10v20" stroke="#0a8f62" strokeWidth="1" /></S> },
  { dot: 1, i: <S><path d="M13.500 1L7.500 3.500l.5 6.500-3 3.500-5 2v5.500l5 1.500 3 5-.5 5.500 6 2.500 3-3.500h4l3 3.500 6-2.500-.5-5.500 3-5 5-1.500v-5.500l-5-2-3-3.500.5-6.500-6-2.500-3 4h-4z" fill="#7f8b96" /><circle cx="18" cy="18" r="9.500" fill="#e8edf2" /><circle cx="18" cy="18" r="6.300" fill="#0f5fb6" /></S> },
];

function Taskbar() {
  return (
    <div className="flex h-[72px] items-stretch border-t-2 border-white/15 bg-[linear-gradient(90deg,#12272e_0px,#12262d_980px,#1f2422_1060px,#332019_1170px,#33211a_1280px,#382017_1420px,#2a2419_1530px,#30211a_1620px,#3a1e1b_1710px,#2c1f1c_1820px,#291c1c_1920px)] text-[17px] text-white">
      <div className="relative ml-[33px] mt-[16px] h-9 w-[205px]">
        <svg width="32" height="36" viewBox="0 0 32 36"><path d="M4 0l20 6v25L4 36z" fill="#c62828" /><path d="M8 5h14v24L8 32z" fill="#9c1a1a" /><path d="M0 13q6-3 14 0t15-1M0 20q6-3 14 0t15-1M0 27q6-3 14 0t15-1" fill="none" stroke="#e57373" strokeWidth="2.600" /></svg>
        <span className="absolute -top-[8px] left-[13px] flex h-6 w-6 items-center justify-center rounded-full bg-[#c42b1c] text-[16px]">1</span>
      </div>
      <div className="flex">
        {apps.map((a, i) => (
          <div key={i} className={`flex justify-center ${i === 0 ? "w-[68px] pr-[2px]" : "w-[66px]"}`}>
            <div className={`mt-[4px] flex h-[60px] w-[60px] flex-col items-center rounded-[6px] pt-[12px] ${a.active ? "border border-white/10 bg-white/5 pt-[11px]" : ""}`}>
              {a.i}
              {a.dot && <div className="mt-[6px] h-[5px] w-[9px] rounded-full bg-[#9f9c9a]" />}
              {a.active && <div className="mt-[6px] h-[5px] w-6 shrink-0 rounded-full bg-[#4cc2ff]" />}
            </div>
          </div>
        ))}
      </div>
      <div className="flex flex-1 items-center pb-[3px]">
        <svg className="ml-[103px]" width="16" height="10" viewBox="0 0 16 10"><path d="M1 9l7-7.500L15 9" fill="none" stroke="#fff" strokeWidth="1.900" /></svg>
        <div className="ml-[31px] w-[36px] text-center leading-[23px] tracking-[-0.1px]"><div>ENG</div><div>IN</div></div>
        <svg className="ml-[27px]" width="24" height="18" viewBox="0 0 24 18" fill="none" stroke="#fff" strokeWidth="1.700"><path d="M1 6.500a16 16 0 0 1 22 0M4 10a11.500 11.500 0 0 1 16 0M7.200 13a7 7 0 0 1 9.600 0" /><circle cx="12" cy="15.500" r="2" fill="#fff" stroke="none" /></svg>
        <svg className="ml-[12px]" width="24" height="20" viewBox="0 0 24 20" fill="none" stroke="#fff" strokeWidth="1.600"><path d="M1 7v6h3.500l5 5V2l-5 5zM13 6.500q2.500 3.500 0 7M16 4q4.500 6 0 12" /><path d="M19 1.500q6 8.500 0 17" stroke="#8a7a77" /></svg>
        <svg className="ml-[12px]" width="24" height="16" viewBox="0 0 24 16"><rect x="1" y="1" width="19" height="14" rx="3.500" fill="none" stroke="#fff" strokeWidth="1.700" /><rect x="3.500" y="3.500" width="8.500" height="9" rx="1" fill="#fff" /><path d="M21 5q3 0 3 3t-3 3z" fill="#fff" /></svg>
        <div className="w-[118px] text-right leading-[23.500px]"><div>15:03</div><div className="whitespace-nowrap tracking-[0.4px]">01-12-2024</div></div>
        <svg className="ml-[13px]" width="20" height="23" viewBox="0 0 20 23" fill="#99ebff"><path d="M10 0a7.300 7.300 0 0 0-7.300 7.300V12L.3 16.800q-.6 1.500 1 1.700h17.400q1.600-.2 1-1.700L17.300 12V7.300A7.300 7.300 0 0 0 10 0zM6.500 20h7q-1 3-3.500 3t-3.500-3z" /></svg>
      </div>
    </div>
  );
}

export default function App() {
  return (
    <div className="h-[1080px] w-[1920px] overflow-hidden font-['Open_Sans','Noto_Sans',sans-serif]">
      <TabStrip />
      <Toolbar />
      <Bookmarks />
      <Page />
      <Taskbar />
    </div>
  );
}
